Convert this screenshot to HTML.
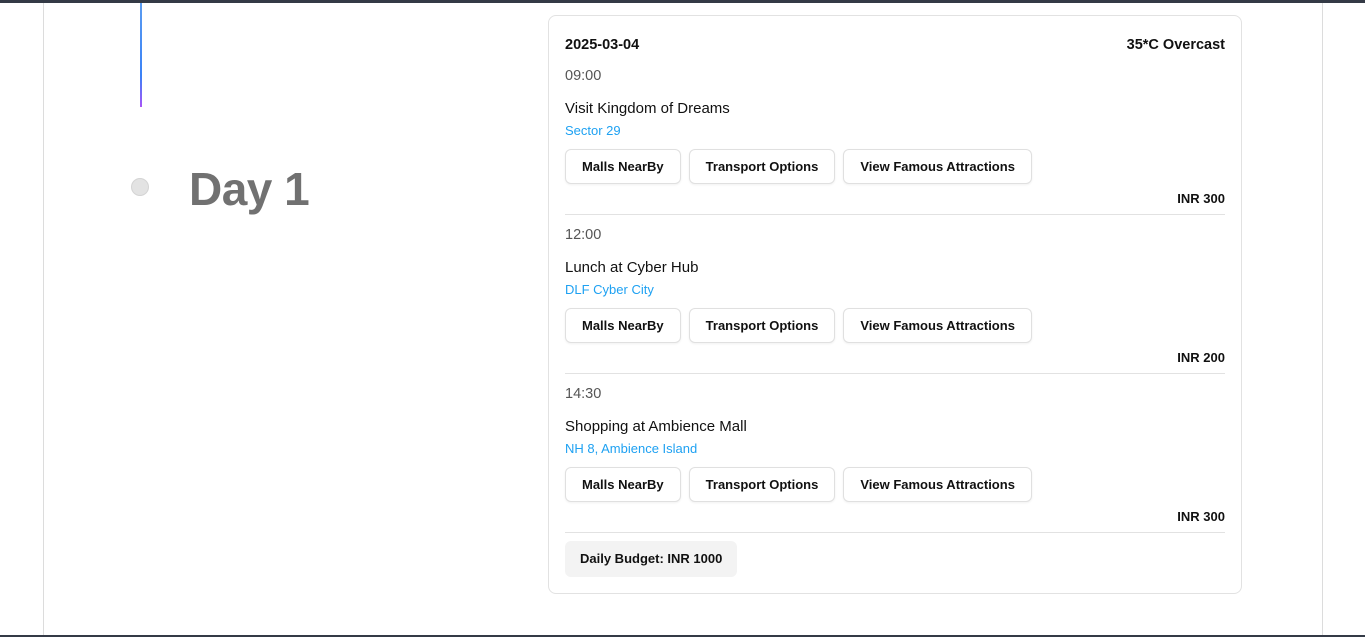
<!DOCTYPE html>
<html><head><style>
*{margin:0;padding:0;box-sizing:border-box}
body{width:1365px;height:637px;background:#fff;font-family:"Liberation Sans",sans-serif;position:relative;overflow:hidden}
.top{position:absolute;left:0;top:0;width:1365px;height:3px;background:#343a46}
.bot{position:absolute;left:0;top:635px;width:1365px;height:2px;background:#343a46}
.vl{position:absolute;top:3px;width:1px;height:632px;background:#dcdcdc}
.grad{position:absolute;left:140px;top:3px;width:2px;height:104px;background:linear-gradient(#5b9cf0,#3b82f6 70%,#a855f7)}
.dot{position:absolute;left:131px;top:178px;width:18px;height:18px;border-radius:50%;background:#e3e3e3;border:1px solid #d4d4d4}
.day{position:absolute;left:189px;top:162px;font-size:46px;font-weight:bold;color:#717171;letter-spacing:-0.5px}
.card{position:absolute;left:548px;top:15px;width:694px;height:579px;border:1px solid #e2e2e2;border-radius:8px;padding:0 16px}
.hdr{position:absolute;top:21px;left:16px;right:16px;font-size:14.5px;font-weight:bold;color:#111;display:flex;justify-content:space-between}
.item{position:absolute;left:16px;right:16px;height:147px;border-bottom:1px solid #e2e2e2}
.time{position:absolute;top:0;font-size:14.5px;color:#555}
.title{position:absolute;top:32px;font-size:15px;color:#111}
.loc{position:absolute;top:55px;font-size:13px;color:#1ea1f2}
.btns{position:absolute;top:81px;display:flex;gap:8px}
.btn{height:35px;border:1px solid #e0e0e0;border-radius:6px;padding:0 16px;font-size:13px;font-weight:bold;color:#111;line-height:33px;box-shadow:0 1px 2px rgba(0,0,0,.06);background:#fff}
.inr{position:absolute;right:0;top:123px;font-size:13px;font-weight:bold;color:#111}
.budget{position:absolute;left:16px;top:525px;height:36px;padding:0 15px;line-height:36px;background:#f3f3f3;border-radius:6px;font-size:13px;font-weight:bold;color:#111}
</style></head><body>
<div class="top"></div><div class="bot"></div>
<div class="vl" style="left:43px"></div><div class="vl" style="left:1322px"></div>
<div class="grad"></div>
<div class="dot"></div>
<div class="day">Day 1</div>
<div class="card">
<div class="hdr"><span>2025-03-04</span><span>35*C Overcast</span></div>
<div class="item" style="top:52px">
<div class="time">09:00</div><div class="title">Visit Kingdom of Dreams</div><div class="loc">Sector 29</div>
<div class="btns"><div class="btn">Malls NearBy</div><div class="btn">Transport Options</div><div class="btn">View Famous Attractions</div></div>
<div class="inr">INR 300</div></div>
<div class="item" style="top:211px">
<div class="time">12:00</div><div class="title">Lunch at Cyber Hub</div><div class="loc">DLF Cyber City</div>
<div class="btns"><div class="btn">Malls NearBy</div><div class="btn">Transport Options</div><div class="btn">View Famous Attractions</div></div>
<div class="inr">INR 200</div></div>
<div class="item" style="top:370px">
<div class="time">14:30</div><div class="title">Shopping at Ambience Mall</div><div class="loc">NH 8, Ambience Island</div>
<div class="btns"><div class="btn">Malls NearBy</div><div class="btn">Transport Options</div><div class="btn">View Famous Attractions</div></div>
<div class="inr">INR 300</div></div>
<div class="budget">Daily Budget: INR 1000</div>
</div>
</body></html>
